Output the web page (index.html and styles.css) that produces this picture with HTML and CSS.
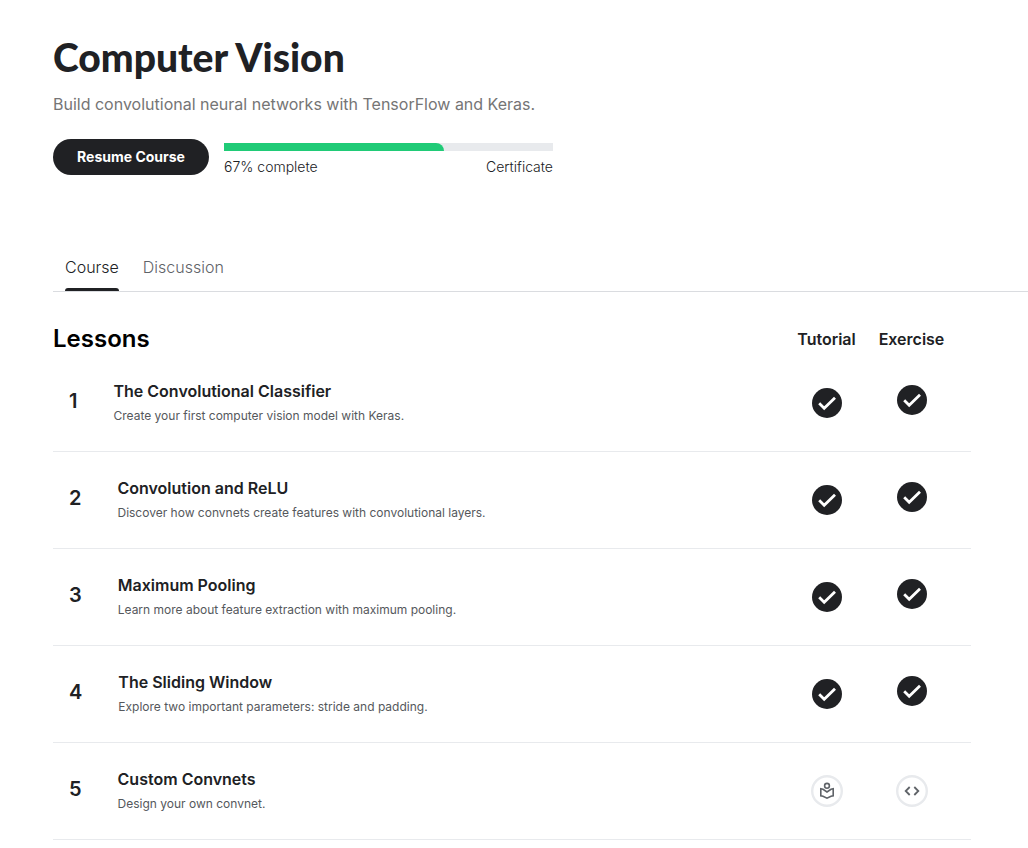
FILE: index.html
```html
<!DOCTYPE html>
<html lang="en">
<head>
<meta charset="utf-8">
<title>Computer Vision</title>
<link rel="stylesheet" href="styles.css">
</head>
<body>
<svg class="defs" aria-hidden="true">
  <symbol id="check" viewBox="0 0 30 30"><circle cx="15" cy="15" r="15" fill="#202124"/><path d="M7.200 15.300l5 5L23 9.800" fill="none" stroke="#fff" stroke-width="2.8"/></symbol>
  <symbol id="reader" viewBox="0 0 32 32"><circle cx="16" cy="16" r="14.8" fill="#fff" stroke="#e8eaed" stroke-width="2.4"/><g fill="none" stroke="#5f6368" stroke-width="1.6"><circle cx="16" cy="10.800" r="2.400"/><path d="M9.800 13.800L12 14.300L16 17L20 14.300L22.200 13.800V20.800L20 21.200L16 23.200L12 21.200L9.800 20.800Z"/></g></symbol>
  <symbol id="code" viewBox="0 0 32 32"><circle cx="16" cy="16" r="14.8" fill="#fff" stroke="#e8eaed" stroke-width="2.4"/><path d="M13.700 12L9.700 16l4 4M18.300 12l4 4-4 4" fill="none" stroke="#5f6368" stroke-width="1.8"/></symbol>
</svg>
<header class="hero">
  <h1 class="title">Computer Vision</h1>
  <p class="subtitle">Build convolutional neural networks with TensorFlow and Keras.</p>
  <div class="actions">
    <button class="resume" type="button">Resume Course</button>
    <div class="progress">
      <div class="track"><div class="fill" style="width:67%"></div></div>
      <div class="progress-labels"><span>67% complete</span><span>Certificate</span></div>
    </div>
  </div>
</header>
<nav class="tabs"><a class="tab active" href="#course">Course</a><a class="tab" href="#discussion">Discussion</a></nav>
<main class="lessons" id="course">
  <div class="head"><h2 class="heading">Lessons</h2><span class="column">Tutorial</span><span class="column">Exercise</span></div>
  <article class="lesson"><span class="number">1</span><div class="copy"><h3 class="name">The Convolutional Classifier</h3><p class="description">Create your first computer vision model with Keras.</p></div><a class="status tutorial" href="#t1" aria-label="Tutorial 1 completed"><svg class="done"><use href="#check"/></svg></a><a class="status" href="#e1" aria-label="Exercise 1 completed"><svg class="done"><use href="#check"/></svg></a></article>
  <article class="lesson"><span class="number">2</span><div class="copy"><h3 class="name">Convolution and ReLU</h3><p class="description">Discover how convnets create features with convolutional layers.</p></div><a class="status tutorial" href="#t2" aria-label="Tutorial 2 completed"><svg class="done"><use href="#check"/></svg></a><a class="status" href="#e2" aria-label="Exercise 2 completed"><svg class="done"><use href="#check"/></svg></a></article>
  <article class="lesson"><span class="number">3</span><div class="copy"><h3 class="name">Maximum Pooling</h3><p class="description">Learn more about feature extraction with maximum pooling.</p></div><a class="status tutorial" href="#t3" aria-label="Tutorial 3 completed"><svg class="done"><use href="#check"/></svg></a><a class="status" href="#e3" aria-label="Exercise 3 completed"><svg class="done"><use href="#check"/></svg></a></article>
  <article class="lesson"><span class="number">4</span><div class="copy"><h3 class="name">The Sliding Window</h3><p class="description">Explore two important parameters: stride and padding.</p></div><a class="status tutorial" href="#t4" aria-label="Tutorial 4 completed"><svg class="done"><use href="#check"/></svg></a><a class="status" href="#e4" aria-label="Exercise 4 completed"><svg class="done"><use href="#check"/></svg></a></article>
  <article class="lesson"><span class="number">5</span><div class="copy"><h3 class="name">Custom Convnets</h3><p class="description">Design your own convnet.</p></div><a class="status pending" href="#t5" aria-label="Tutorial 5"><svg class="todo"><use href="#reader"/></svg></a><a class="status pending" href="#e5" aria-label="Exercise 5"><svg class="todo"><use href="#code"/></svg></a></article>
</main>
</body>
</html>
```
FILE: styles.css
```css
* { box-sizing: border-box; }
body { margin: 0; padding: 36px 0 0 53px; background: #fff; color: #202124; font-family: Inter, sans-serif; }
h1, h2, h3, p { margin: 0; }
a { color: inherit; text-decoration: none; }
.defs { position: absolute; width: 0; height: 0; }
.title { font: 900 39px/42px Lato, sans-serif; }
.subtitle { margin-top: 14px; color: #757575; font-size: 16px; font-weight: 400; line-height: 24px; }
.actions { display: flex; gap: 15px; margin-top: 23px; }
.resume { width: 156px; height: 36px; padding: 0; border: 0; border-radius: 18px; background: #202124; color: #fff; font: 700 14px/20px Inter, sans-serif; }
.progress { width: 329px; padding-top: 4px; }
.track { height: 8px; background: #e8eaed; }
.fill { height: 8px; border-radius: 0 8px 0 0; background: #20cb77; }
.progress-labels { display: flex; justify-content: space-between; margin-top: 6px; font-size: 14px; font-weight: 300; line-height: 20px; }
.tabs { display: flex; gap: 24px; margin-top: 67px; padding-left: 12px; border-bottom: 1px solid #dadce0; }
.tab { height: 47px; padding-top: 11px; color: #5f6368; font-size: 16px; font-weight: 300; line-height: 24px; }
.active { display: flex; flex-direction: column; justify-content: space-between; color: #202124; }
.active::after { content: ""; height: 3px; border-radius: 3px 3px 0 0; background: #202124; }
.lessons { margin-right: 57px; }
.head { display: grid; grid-template-columns: 1fr 85px 85px; align-items: center; padding: 31px 17px 0 0; line-height: 32px; }
.heading { color: #000; font-size: 24px; font-weight: 600; }
.column { font-size: 16px; font-weight: 600; text-align: center; }
.lesson { display: grid; grid-template-columns: auto 1fr 85px 85px; height: 97px; padding: 26px 17px 0 0; border-bottom: 1px solid #e8eaed; }
.number { padding: 0 36px 0 16px; font-size: 20px; font-weight: 600; line-height: 40px; }
.name { font-size: 16px; font-weight: 600; line-height: 20px; }
.description { margin-top: 7px; color: #55585c; font-size: 12px; font-weight: 400; line-height: 16px; }
.status { display: flex; justify-content: center; align-items: flex-start; padding-top: 4px; }
.tutorial { padding-top: 7px; }
.pending { padding-top: 6px; }
.done { width: 30px; height: 30px; }
.todo { width: 32px; height: 32px; }
```
